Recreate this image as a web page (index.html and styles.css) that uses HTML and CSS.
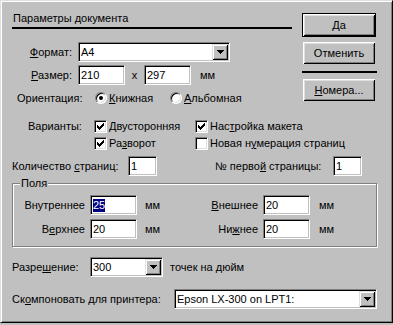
FILE: index.html
```html
<!DOCTYPE html>
<html lang="ru">
<head>
<meta charset="utf-8">
<title>Параметры документа</title>
<link rel="stylesheet" href="styles.css">
</head>
<body>
<div class="dialog">
  <div class="top">
    <div class="left">
      <div class="title">Параметры документа</div>
      <div class="row r-format">
        <span class="lbl lbl-w"><u>Ф</u>ормат:</span>
        <div class="field combo w-format"><span class="val">A4</span><span class="arrow"><svg width="7" height="4" viewBox="0 0 7 4"><path d="M0 0h7v1H0zM1 1h5v1H1zM2 2h3v1H2zM3 3h1v1H3z"/></svg></span></div>
      </div>
      <div class="row r-size">
        <span class="lbl lbl-w"><u>Р</u>азмер:</span>
        <div class="field w-size"><span class="val">210</span></div>
        <span class="times">x</span>
        <div class="field w-size"><span class="val">297</span></div>
        <span class="unit u-size">мм</span>
      </div>
      <div class="row r-orient">
        <span class="lbl lbl-orient">Ориентация:</span>
        <span class="opt opt-first"><span class="radio checked"></span><span class="opt-text"><u>К</u>нижная</span></span>
        <span class="opt"><span class="radio"></span><span class="opt-text"><u>А</u>льбомная</span></span>
      </div>
    </div>
    <div class="buttons">
      <div class="btn default">Да</div>
      <div class="btn">Отменить</div>
      <div class="sep"></div>
      <div class="btn"><u>Н</u>омера...</div>
    </div>
  </div>

  <div class="variants">
    <span class="lbl lbl-var">Варианты:</span>
    <span class="opt"><span class="check"><svg width="7" height="7" viewBox="0 0 7 7"><path d="M6 0h1v1H6zM5 1h2v1H5zM0 2h1v1H0zM4 2h3v1H4zM0 3h2v1H0zM3 3h3v1H3zM0 4h5v1H0zM1 5h3v1H1zM2 6h1v1H2z"/></svg></span><span class="opt-text"><u>Д</u>вусторонняя</span></span>
    <span class="opt"><span class="check"><svg width="7" height="7" viewBox="0 0 7 7"><path d="M6 0h1v1H6zM5 1h2v1H5zM0 2h1v1H0zM4 2h3v1H4zM0 3h2v1H0zM3 3h3v1H3zM0 4h5v1H0zM1 5h3v1H1zM2 6h1v1H2z"/></svg></span><span class="opt-text">Нас<u>т</u>ройка макета</span></span>
    <span></span>
    <span class="opt"><span class="check"><svg width="7" height="7" viewBox="0 0 7 7"><path d="M6 0h1v1H6zM5 1h2v1H5zM0 2h1v1H0zM4 2h3v1H4zM0 3h2v1H0zM3 3h3v1H3zM0 4h5v1H0zM1 5h3v1H1zM2 6h1v1H2z"/></svg></span><span class="opt-text">Ра<u>з</u>ворот</span></span>
    <span class="opt"><span class="check"></span><span class="opt-text">Новая н<u>у</u>мерация страниц</span></span>
  </div>

  <div class="row r-pages">
    <span class="lbl lbl-pages">Количество <u>с</u>траниц:</span>
    <div class="field w-pages"><span class="val">1</span></div>
    <span class="lbl lbl-first">№ перво<u>й</u> страницы:</span>
    <div class="field w-pages"><span class="val">1</span></div>
  </div>

  <fieldset class="group">
    <legend>Поля</legend>
    <div class="row g-row">
      <span class="lbl g-lbl">Внутреннее</span>
      <div class="field w-margin"><span class="val sel">25</span></div>
      <span class="unit g-unit">мм</span>
      <span class="lbl g-lbl2"><u>В</u>нешнее</span>
      <div class="field w-margin"><span class="val">20</span></div>
      <span class="unit g-unit2">мм</span>
    </div>
    <div class="row g-row g-row2">
      <span class="lbl g-lbl">В<u>е</u>рхнее</span>
      <div class="field w-margin"><span class="val">20</span></div>
      <span class="unit g-unit">мм</span>
      <span class="lbl g-lbl2">Ни<u>ж</u>нее</span>
      <div class="field w-margin"><span class="val">20</span></div>
      <span class="unit g-unit2">мм</span>
    </div>
  </fieldset>

  <div class="row r-res">
    <span class="lbl lbl-res">Разре<u>ш</u>ение:</span>
    <div class="field combo w-res"><span class="val">300</span><span class="arrow"><svg width="7" height="4" viewBox="0 0 7 4"><path d="M0 0h7v1H0zM1 1h5v1H1zM2 2h3v1H2zM3 3h1v1H3z"/></svg></span></div>
    <span class="unit u-res">точек на дюйм</span>
  </div>

  <div class="row r-printer">
    <span class="lbl lbl-printer">Ск<u>о</u>мпоновать для принтера:</span>
    <div class="field combo w-printer"><span class="val">Epson LX-300 on LPT1:</span><span class="arrow"><svg width="7" height="4" viewBox="0 0 7 4"><path d="M0 0h7v1H0zM1 1h5v1H1zM2 2h3v1H2zM3 3h1v1H3z"/></svg></span></div>
  </div>
</div>
</body>
</html>
```
FILE: styles.css
```css
* { box-sizing: border-box; }
html, body { margin: 0; padding: 0; background: #c0c0c0; }
body {
  font-family: "Liberation Sans", Arial, sans-serif;
  font-size: 11px;
  line-height: 13px;
  color: #000;
}
u { text-decoration: underline; text-decoration-thickness: 1px; text-underline-offset: 1px; }

.dialog {
  width: 393px;
  height: 323px;
  border: 1px solid;
  border-color: #dfdfdf #000 #000 #dfdfdf;
  box-shadow: inset 1px 1px #fff, inset -1px -1px #808080;
  padding: 1px 15px 0 11px;
}

.top { display: flex; justify-content: space-between; }
.left { width: 280px; }
.title {
  margin-top: 10px;
  padding: 0 0 2px 1px;
  border-bottom: 2px solid #000;
}

.buttons { width: 75px; display: flex; flex-direction: column; padding-top: 11px; }
.btn {
  width: 72px;
  height: 22px;
  margin-left: 1px;
  display: flex;
  align-items: center;
  justify-content: center;
  box-shadow: inset 1px 1px #fff, inset -1px -1px #000, inset 2px 2px #dfdfdf, inset -2px -2px #808080;
}
.btn.default {
  width: 74px;
  height: 24px;
  margin-left: 0;
  border: 1px solid #000;
  margin-bottom: 5px;
}
.sep { width: 75px; height: 2px; background: #000; margin: 7px 0 6px; }

.row { display: flex; align-items: center; }
.lbl { flex: none; white-space: nowrap; }
.lbl-w { width: 60px; text-align: right; margin-right: 6px; }

.field {
  flex: none;
  height: 20px;
  background: #fff;
  border: 1px solid;
  border-color: #808080 #fff #fff #808080;
  box-shadow: inset 1px 1px #000, inset -1px -1px #c0c0c0;
  padding-left: 2px;
  display: flex;
  align-items: center;
  white-space: nowrap;
}
.combo .arrow {
  margin-left: auto;
  margin-right: 1px;
  width: 16px;
  height: 16px;
  background: #c0c0c0;
  box-shadow: inset 1px 1px #dfdfdf, inset -1px -1px #000, inset 2px 2px #fff, inset -2px -2px #808080;
  display: flex;
  align-items: center;
  justify-content: center;
}
.arrow svg { display: block; shape-rendering: crispEdges; }
.sel { background: #000080; color: #fff; }

.r-format { margin-top: 13px; }
.w-format { width: 152px; }
.r-size { margin-top: 3px; }
.w-size { width: 47px; }
.times { width: 19px; text-align: center; }
.u-size { margin-left: 9px; }

.r-orient { margin-top: 6px; height: 14px; }
.lbl-orient { margin-left: 5px; width: 78px; }
.opt { display: flex; align-items: center; white-space: nowrap; }
.opt-first { width: 75px; }
.opt-text { margin-left: 2px; }

.radio {
  flex: none;
  width: 12px;
  height: 12px;
  border-radius: 50%;
  background: #fff;
  border: 1px solid;
  border-color: #808080 #fff #fff #808080;
  box-shadow: inset 1px 1px #000, inset -1px -1px #dfdfdf;
  display: flex;
  align-items: center;
  justify-content: center;
}
.radio.checked::after {
  content: "";
  width: 4px;
  height: 4px;
  border-radius: 50%;
  background: #000;
}

.variants {
  margin-top: 15px;
  display: grid;
  grid-template-columns: 82px 101px auto;
  row-gap: 4px;
  align-items: center;
}
.lbl-var { padding-left: 16px; }
.check {
  flex: none;
  width: 13px;
  height: 13px;
  background: #fff;
  border: 1px solid;
  border-color: #808080 #fff #fff #808080;
  box-shadow: inset 1px 1px #000, inset -1px -1px #dfdfdf;
  display: flex;
  align-items: center;
  justify-content: center;
}
.check svg { display: block; shape-rendering: crispEdges; }

.r-pages { margin-top: 6px; }
.lbl-pages { width: 116px; }
.w-pages { width: 29px; }
.lbl-first { margin-left: 58px; width: 118px; }

.group {
  margin: 1px 0 0;
  width: 365px;
  padding: 5px 0 7px;
  border: 1px solid #808080;
  box-shadow: inset 1px 1px #fff, 1px 1px #fff;
  min-width: 0;
}
.group legend {
  margin-left: 7px;
  padding: 0 1px;
  background: #c0c0c0;
  line-height: 13px;
}
.g-row2 { margin-top: 4px; }
.g-lbl { width: 72px; text-align: right; margin-right: 5px; }
.w-margin { width: 47px; }
.g-unit { margin-left: 8px; width: 40px; }
.g-lbl2 { width: 73px; text-align: right; margin-right: 5px; }
.g-unit2 { margin-left: 9px; }

.r-res { margin-top: 10px; }
.lbl-res { width: 78px; }
.w-res { width: 73px; }
.u-res { margin-left: 7px; }

.r-printer { margin-top: 12px; }
.lbl-printer { width: 162px; }
.w-printer { flex: 1; }
```
